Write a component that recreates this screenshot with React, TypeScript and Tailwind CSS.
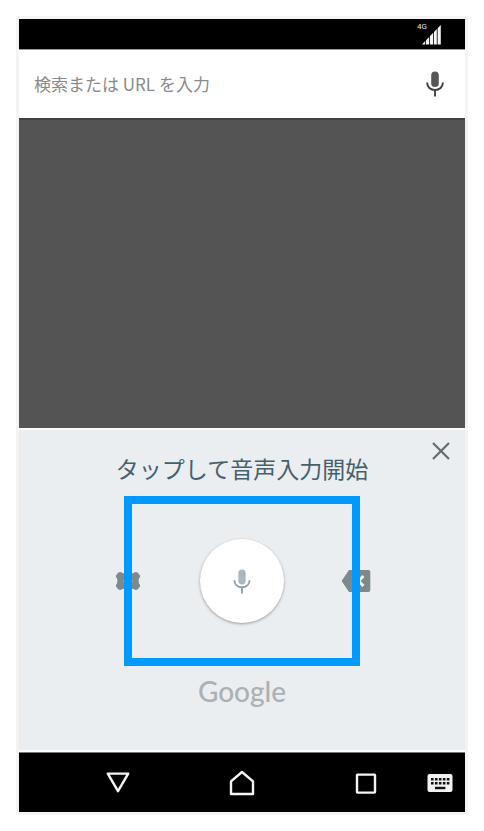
import { useState } from "react";

const MicIcon = ({ className, body, stem }: { className: string; body: string; stem: string }) => (
  <svg viewBox="0 0 18 26" className={className} fill="none" aria-hidden="true">
    <rect x="5.2" y="0.6" width="7.6" height="15.4" rx="3.8" fill={body} />
    <path
      d="M1.1 11.6c0 4.4 3.4 7.4 7.9 7.4s7.9-3 7.9-7.4M9 19v6.4"
      stroke={stem}
      strokeWidth="1.9"
    />
  </svg>
);

const StatusBar = () => (
  <div className="flex h-[30px] items-start justify-end bg-black pr-6 pt-[4px]">
    <span className="font-['Roboto',sans-serif] text-[8px] leading-[8px] text-[#e4e4e4]">
      4G
    </span>
    <svg viewBox="0 0 19 20" className="-ml-[5px] mt-[2px] h-5 w-[19px]" fill="#f4f4f4" aria-hidden="true">
      <path d="M0 19.5l3.2-3.4v3.4zM4 19.5v-4.2l3.2-3.4v7.6zM8 19.5v-8.4l3.2-3.3v11.7zM12 19.5V7l2.8-2.9v15.4zM15.6 19.5V3.3L18.8 0v19.5z" />
    </svg>
  </div>
);

const SearchBar = () => {
  const [query, setQuery] = useState("");

  return (
    <div className="flex h-[69px] items-center border-t border-[#999] bg-white pl-[15px] pr-5">
      <input
        type="text"
        aria-label="検索または URL を入力"
        placeholder="検索または URL を入力"
        value={query}
        onChange={(e) => setQuery(e.target.value)}
        className="min-w-0 flex-1 bg-transparent text-[17px] leading-6 text-[#444] outline-none placeholder:text-[#8a8a8a]"
      />
      <button type="button" aria-label="音声検索" className="flex h-8 w-5 items-center justify-center">
        <MicIcon className="h-[26px] w-[18px]" body="#575757" stem="#404040" />
      </button>
    </div>
  );
};

const VoicePanel = () => (
  <div className="relative border-y-2 border-[#fafcfc] bg-[#eaeef1] pb-[42px] pt-[22px]">
    <button type="button" aria-label="閉じる" className="absolute right-3 top-[9px] flex size-6 items-center justify-center">
      <svg viewBox="0 0 18 18" className="size-[18px]" stroke="#5f6e72" strokeWidth="2.2" aria-hidden="true">
        <path d="M1 1l16 16M17 1L1 17" />
      </svg>
    </button>

    <h1 className="text-center text-[23px] leading-8 text-[#46606b]">
      タップして音声入力開始
    </h1>

    <div className="relative mt-3 flex h-[170px] items-center justify-center gap-14">
      <button type="button" aria-label="設定" className="flex size-8 items-center justify-center">
        <svg viewBox="0 0 26 20" className="h-5 w-[26px]" aria-hidden="true">
          <path
            d="M4.6 1.6Q6 1.2 7.2 2.4Q8.6 3 10 2L11 1.4H15L16 2Q17.4 3 18.8 2.4Q20 1.2 21.4 1.6Q23 1.8 23.8 3.6Q25.2 5 24.4 6.2Q23 7.6 23 10Q23 12.4 24.4 13.8Q25.2 15 23.8 16.4Q23 18.2 21.4 18.4Q20 18.8 18.8 17.6Q17.4 17 16 18L15 18.6H11L10 18Q8.6 17 7.2 17.6Q6 18.8 4.6 18.4Q3 18.2 2.2 16.4Q.8 15 1.6 13.8Q3 12.4 3 10Q3 7.6 1.6 6.2Q.8 5 2.2 3.6Q3 1.8 4.6 1.6Z"
            fill="#7e898c"
            stroke="#7e898c"
            strokeLinejoin="round"
          />
          <circle cx="13" cy="10" r="4.4" fill="#c5cccf" />
        </svg>
      </button>
      <button
        type="button"
        aria-label="音声入力"
        className="flex size-[84px] items-center justify-center rounded-full bg-white shadow-[0_1px_3px_rgba(0,0,0,0.35)]"
      >
        <MicIcon className="h-[25px] w-[18px]" body="#a9b7be" stem="#8d9fa8" />
      </button>
      <button type="button" aria-label="削除" className="flex size-8 items-center justify-center">
        <svg viewBox="0 0 30 24" className="h-6 w-[30px]" aria-hidden="true">
          <path d="M8 1h19.5A1.8 1.8 0 0 1 29.3 2.8v18.4a1.8 1.8 0 0 1-1.8 1.8H8L.6 12z" fill="#7e898c" />
          <path d="M13 7l9.4 10M22.4 7L13 17" stroke="#f4f7f8" strokeWidth="2.8" />
        </svg>
      </button>
      <div className="pointer-events-none absolute inset-y-0 left-1/2 w-[236px] -translate-x-1/2 border-8 border-[#0099ff]" />
    </div>

    <p className="mt-2 text-center font-['Lato',sans-serif] text-[28px] font-medium leading-[34px] text-[#acb1b3]">
      Google
    </p>
  </div>
);

const NavBar = () => (
  <nav className="flex h-[60px] items-center border-t border-[#777] bg-black px-3">
    <div className="flex-1" />
    <div className="flex gap-[92px]">
      <button type="button" aria-label="戻る" className="flex size-8 items-center justify-center">
        <svg viewBox="0 0 24 24" className="size-6" fill="none" stroke="#f5f5f5" strokeWidth="2.4" aria-hidden="true">
          <path d="M1.8 2.6h20.4L12 20.2z" strokeLinejoin="round" />
        </svg>
      </button>
      <button type="button" aria-label="ホーム" className="flex size-8 items-center justify-center">
        <svg viewBox="0 0 26 26" className="size-[26px]" fill="none" stroke="#f5f5f5" strokeWidth="2.4" aria-hidden="true">
          <path d="M2 24V11.4L13 2l11 9.4V24z" strokeLinejoin="round" />
        </svg>
      </button>
      <button type="button" aria-label="アプリ履歴" className="flex size-8 items-center justify-center">
        <svg viewBox="0 0 22 22" className="size-[22px]" fill="none" stroke="#f5f5f5" strokeWidth="2.4" aria-hidden="true">
          <rect x="2" y="2.6" width="18" height="18" rx="0.6" />
        </svg>
      </button>
    </div>
    <div className="flex flex-1 justify-end">
      <button type="button" aria-label="キーボード" className="flex h-8 w-[26px] items-center justify-center">
        <svg viewBox="0 0 26 18" className="h-[18px] w-[26px]" aria-hidden="true">
          <rect x="0.5" y="0" width="25" height="18" rx="2" fill="#f2f2f2" />
          <path d="M4 5.2h18.4M4 9.2h18.4" stroke="#111" strokeWidth="2.4" strokeDasharray="2.6 1.35" />
          <path d="M8 14h10.4" stroke="#111" strokeWidth="2.4" />
        </svg>
      </button>
    </div>
  </nav>
);

const App = () => {
  return (
    <div className="min-h-screen bg-white p-4 font-['Noto_Sans_CJK_JP',sans-serif]">
      <div className="border-[3px] border-[#f3f3f3]">
        <StatusBar />
        <SearchBar />
        <div className="h-[310px] border-t-2 border-[#414141] bg-[#545454]" />
        <VoicePanel />
        <NavBar />
      </div>
    </div>
  );
};

export default App;
